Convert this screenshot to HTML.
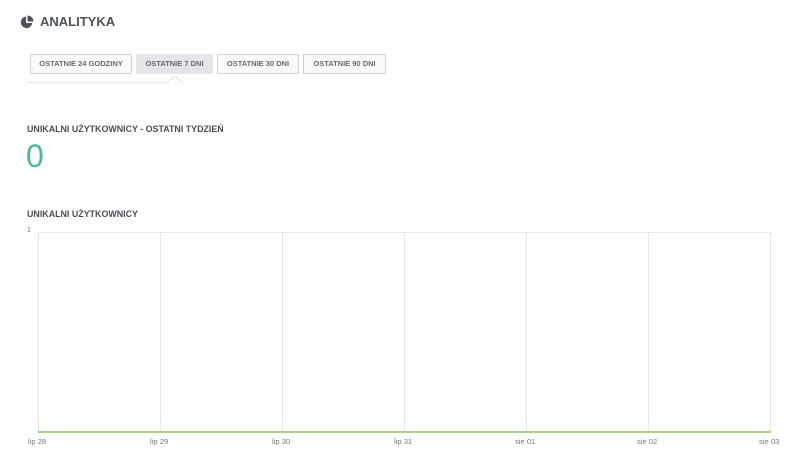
<!DOCTYPE html>
<html><head><meta charset="utf-8"><style>
body{margin:0;width:798px;height:458px;background:#fff;font-family:"Liberation Sans",sans-serif;position:relative;overflow:hidden;color:#555a60}
.a{position:absolute}
.btn{position:absolute;top:54px;height:20px;border:1px solid #cfd0d3;border-radius:2px;box-sizing:border-box;font-size:7.5px;font-weight:bold;color:#666a70;line-height:18px;text-align:center;background:#fafafa}
.lbl{font-size:8.9px;font-weight:bold;color:#4a4e55}
.x{font-size:7.6px;color:#777;top:437px}
</style></head><body>
<svg class="a" style="left:20px;top:15px" width="14" height="14" viewBox="0 0 14 14"><path d="M6 1.5A5.8 5.8 0 1 0 12.3 8H6Z" fill="#4f535a"/><path d="M7.5 0.5A6 6 0 0 1 13.5 6.5H7.5Z" fill="#4f535a"/></svg>
<div class="a" style="left:40px;top:14px;font-size:13px;font-weight:bold;color:#4f535a">ANALITYKA</div>
<div class="btn" style="left:30px;width:102px">OSTATNIE 24 GODZINY</div>
<div class="btn" style="left:136px;width:77px;background:#e4e5e8;border-color:#e4e5e8">OSTATNIE 7 DNI</div>
<div class="btn" style="left:217px;width:82px">OSTATNIE 30 DNI</div>
<div class="btn" style="left:303px;width:83px">OSTATNIE 90 DNI</div>
<div class="a" style="left:27px;top:82px;width:141px;height:1px;background:#e6e6e6"></div>
<svg class="a" style="left:166px;top:75px" width="18" height="9"><path d="M1 8L9 1L17 8" fill="none" stroke="#e0e0e0"/></svg>
<div class="a lbl" style="left:27px;top:124px">UNIKALNI UŻYTKOWNICY - OSTATNI TYDZIEŃ</div>
<div class="a" style="left:26px;top:138px;font-size:32px;color:#4db6a0">0</div>
<div class="a lbl" style="left:27px;top:209px">UNIKALNI UŻYTKOWNICY</div>
<div class="a" style="left:27px;top:227px;font-size:7px;color:#777">1</div>
<svg class="a" style="left:0;top:0" width="798" height="458">
<g stroke="#e6e6e6" stroke-width="1">
<line x1="38" y1="232.5" x2="770" y2="232.5"/>
<line x1="38.5" y1="232" x2="38.5" y2="432"/><line x1="160.5" y1="232" x2="160.5" y2="432"/><line x1="282.5" y1="232" x2="282.5" y2="432"/><line x1="404.5" y1="232" x2="404.5" y2="432"/><line x1="526.5" y1="232" x2="526.5" y2="432"/><line x1="648.5" y1="232" x2="648.5" y2="432"/><line x1="770.5" y1="232" x2="770.5" y2="432"/>
</g>
<line x1="38" y1="432" x2="771" y2="432" stroke="#8dc95a" stroke-width="1.5"/>
</svg>
<div class="a x" style="left:28px">lip 28</div>
<div class="a x" style="left:150px">lip 29</div>
<div class="a x" style="left:272px">lip 30</div>
<div class="a x" style="left:394px">lip 31</div>
<div class="a x" style="left:515px">sie 01</div>
<div class="a x" style="left:637px">sie 02</div>
<div class="a x" style="left:759px">sie 03</div>
</body></html>
